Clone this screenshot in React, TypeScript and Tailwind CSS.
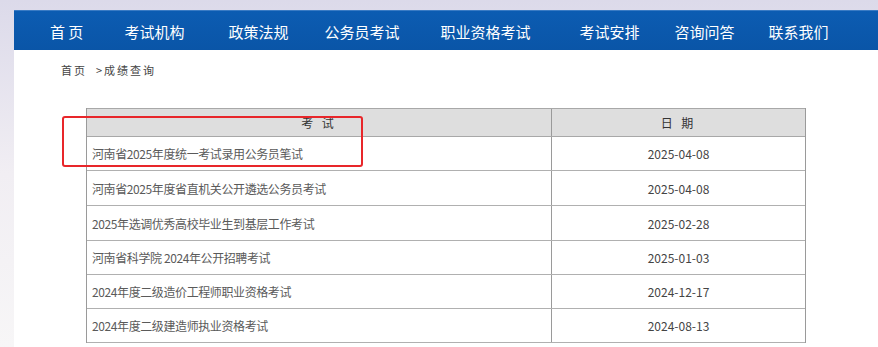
const navItems = [
  { label: "首 页", cls: "ml-[36px]" },
  { label: "考试机构", cls: "ml-[41px]" },
  { label: "政策法规", cls: "ml-[44px]" },
  { label: "公务员考试", cls: "ml-[36px]" },
  { label: "职业资格考试", cls: "ml-[41px]" },
  { label: "考试安排", cls: "ml-[49px]" },
  { label: "咨询问答", cls: "ml-[35px]" },
  { label: "联系我们", cls: "ml-[34px]" },
];

const rows = [
  { name: "河南省2025年度统一考试录用公务员笔试", date: "2025-04-08", h: "h-[34px]" },
  { name: "河南省2025年度省直机关公开遴选公务员考试", date: "2025-04-08", h: "h-[35px]" },
  { name: "2025年选调优秀高校毕业生到基层工作考试", date: "2025-02-28", h: "h-[35px]" },
  { name: "河南省科学院 2024年公开招聘考试", date: "2025-01-03", h: "h-[34px]" },
  { name: "2024年度二级造价工程师职业资格考试", date: "2024-12-17", h: "h-[34px]" },
  { name: "2024年度二级建造师执业资格考试", date: "2024-08-13", h: "h-[34px]" },
];

function App() {
  return (
    <div
      className="w-[878px] h-[347px] overflow-hidden flex flex-col pt-[10px] pl-[14px] bg-gradient-to-b from-[#dcdaea] via-[#f1eef3] to-[#f7f6f7]"
      style={{ fontFamily: '"Noto Sans CJK SC", "Noto Sans", sans-serif' }}
    >
      {/* nav */}
      <nav className="h-[40px] shrink-0 flex items-center bg-gradient-to-b from-[#0c5cb2] to-[#0a55a7] border-t border-[#3a7bc4] text-white text-[15px]">
        {navItems.map((n) => (
          <span key={n.label} className={`${n.cls} pt-[1px] leading-none whitespace-nowrap`}>
            {n.label}
          </span>
        ))}
      </nav>

      <main className="relative flex-1 bg-white">
        <div className="pt-[10px] pl-[47px] flex text-[11px] leading-[20px] tracking-[2px] text-[#444]">
          <span className="mr-[9px]">首页</span>
          <span>&gt;成绩查询</span>
        </div>

        <div className="mt-[28px] ml-[72px] w-[720px] border-x border-[#9a9a9a] text-[12px]">
          <div className="flex h-[29px] bg-[#dedede] border-t border-b border-[#a8a8a8] text-[#333] tracking-[3px]">
            <div className="w-[465px] flex items-center justify-center border-r border-[#9a9a9a]">考 试</div>
            <div className="flex-1 flex items-center justify-center">日 期</div>
          </div>
          {rows.map((r) => (
            <div key={r.name} className={`flex ${r.h} border-b border-[#b0b0b0] text-[#5a5a5a]`}>
              <div className="w-[465px] flex items-center pl-[5px] pt-[1px] tracking-[-0.4px] border-r border-[#9a9a9a]">{r.name}</div>
              <div className="flex-1 flex items-center justify-center pt-[1px] text-[#444]">{r.date}</div>
            </div>
          ))}
        </div>

        {/* highlight box */}
        <div className="absolute left-[48px] top-[66px] w-[301px] h-[51px] border-2 border-[#e8262a] rounded-[3px]" />
      </main>
    </div>
  );
}

export default App;
